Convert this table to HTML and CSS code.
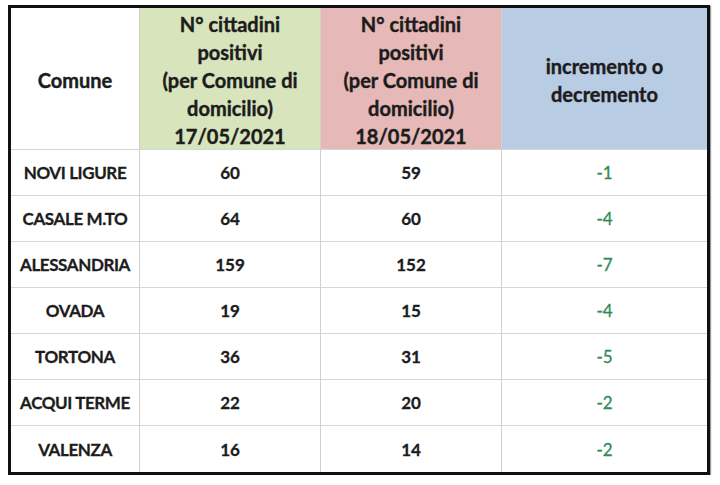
FILE: index.html
```html
<!DOCTYPE html>
<html>
<head>
<meta charset="utf-8">
<link rel="stylesheet" href="styles.css">
</head>
<body>
<div class="frame">
  <div class="grid">
    <div class="cell head">Comune</div>
    <div class="cell head green">N° cittadini<br>positivi<br>(per Comune di<br>domicilio)<br>17/05/2021</div>
    <div class="cell head pink">N° cittadini<br>positivi<br>(per Comune di<br>domicilio)<br>18/05/2021</div>
    <div class="cell head blue">incremento o<br>decremento</div>

    <div class="cell name">NOVI LIGURE</div><div class="cell num">60</div><div class="cell num">59</div><div class="cell diff">-1</div>
    <div class="cell name">CASALE M.TO</div><div class="cell num">64</div><div class="cell num">60</div><div class="cell diff">-4</div>
    <div class="cell name">ALESSANDRIA</div><div class="cell num">159</div><div class="cell num">152</div><div class="cell diff">-7</div>
    <div class="cell name">OVADA</div><div class="cell num">19</div><div class="cell num">15</div><div class="cell diff">-4</div>
    <div class="cell name">TORTONA</div><div class="cell num">36</div><div class="cell num">31</div><div class="cell diff">-5</div>
    <div class="cell name">ACQUI TERME</div><div class="cell num">22</div><div class="cell num">20</div><div class="cell diff">-2</div>
    <div class="cell name">VALENZA</div><div class="cell num">16</div><div class="cell num">14</div><div class="cell diff">-2</div>
  </div>
</div>
</body>
</html>
```

FILE: styles.css
```css
html, body {
  margin: 0;
  background: #ffffff;
}
body {
  padding: 5px 0 0 8px;
  font-family: Lato, "Open Sans", "Liberation Sans", sans-serif;
  color: #1c1c1c;
}
.frame {
  width: 696px;
  border: 3px solid #111111;
  box-shadow: 1px 1px 1px rgba(0,0,0,0.4);
}
.grid {
  display: grid;
  grid-template-columns: 129px 181px 181px 205px;
  grid-template-rows: 142px repeat(7, 46px);
}
.cell {
  display: flex;
  align-items: center;
  justify-content: center;
  text-align: center;
  border-right: 1px solid #cfcfcf;
  border-bottom: 1px solid #d6d6d6;
  box-sizing: border-box;
}
.cell:nth-child(4n) {
  border-right: none;
}
.cell:nth-last-child(-n+4) {
  border-bottom: none;
}
.head {
  font-weight: 700;
  font-size: 20px;
  line-height: 28px;
  padding-top: 2px;
  -webkit-text-stroke: 0.4px #1c1c1c;
}
.green { background: #d8e4bc; }
.pink { background: #e6b8b7; }
.blue { background: #b8cce4; }
.name {
  font-weight: 700;
  font-size: 17px;
  letter-spacing: -0.4px;
  -webkit-text-stroke: 0.3px #1c1c1c;
}
.num {
  font-weight: 700;
  font-size: 17px;
  -webkit-text-stroke: 0.3px #1c1c1c;
}
.diff {
  font-size: 17px;
  color: #2e8b57;
  -webkit-text-stroke: 0.3px #2e8b57;
}
```
